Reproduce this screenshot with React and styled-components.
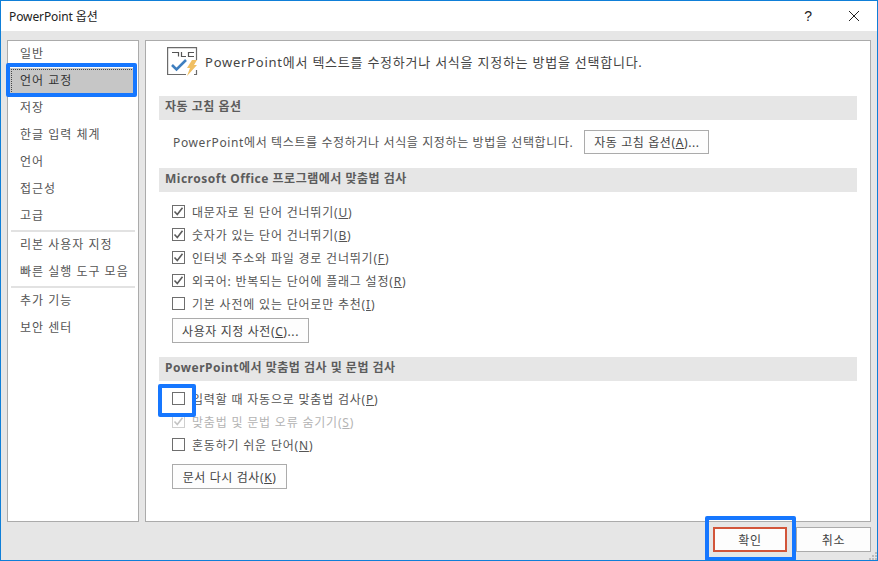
import React from "react"
import styled, { createGlobalStyle } from "styled-components"

const GlobalStyle = createGlobalStyle`
  html, body { margin: 0; padding: 0; background: #fff; }
  * { box-sizing: border-box; }
`

const Window = styled.div`
  position: relative;
  width: 878px;
  height: 561px;
  display: flex;
  flex-direction: column;
  background: #e6e6e6;
  border: 1px solid #0f7fd8;
  font-family: "Noto Sans", "Noto Sans CJK KR", sans-serif;
  font-size: 12px;
  color: #444;
  overflow: hidden;
`

const TitleBar = styled.div`
  height: 30px;
  flex: none;
  display: flex;
  align-items: center;
  background: #fff;
  padding-left: 8px;
  color: #222;
  letter-spacing: -0.1px;
`

const TitleText = styled.div`
  flex: 1;
`

const TitleButton = styled.div`
  width: 46px;
  height: 30px;
  display: flex;
  align-items: center;
  justify-content: center;
  color: #222;
  font-size: 14px;
  font-family: "Liberation Sans", sans-serif;
`

const Body = styled.div`
  flex: 1;
  display: flex;
  gap: 6px;
  padding: 9px 6px 0;
  height: 491px;
`

const Sidebar = styled.div`
  width: 132px;
  height: 482px;
  background: #fff;
  border: 1px solid #ababab;
  display: flex;
  flex-direction: column;
`

const NavItem = styled.div`
  height: 27px;
  flex: none;
  margin: 0 ${(p) => (p.$active ? "3px" : "0")} 0 ${(p) => (p.$active ? "2px" : "0")};
  padding: 0 0 4px ${(p) => (p.$active ? "10px" : "12px")};
  display: flex;
  align-items: center;
  letter-spacing: 1px;
  color: ${(p) => (p.$active ? "#333" : "#555")};
  background: ${(p) => (p.$active ? "#c6c6c6" : "transparent")};
  outline: ${(p) => (p.$active ? "1px dotted #444" : "none")};
  outline-offset: -2px;
`

const NavGap = styled.div`
  height: 2px;
  background: #e2e2e2;
  margin: 0 3px;
`

const Main = styled.div`
  width: 726px;
  height: 482px;
  background: #fff;
  border: 1px solid #ababab;
  padding: 0 13px;
`

const Lead = styled.div`
  height: 40px;
  display: flex;
  align-items: center;
  gap: 7px;
  padding-left: 8px;
  letter-spacing: 0.76px;
  font-size: 13px;
  color: #444;
`

const Section = styled.div`
  height: 24px;
  margin-top: ${(p) => p.$top || 15}px;
  padding: 0 0 4px 6px;
  background: #e6e6e6;
  display: flex;
  align-items: center;
  font-weight: 700;
  letter-spacing: 0.5px;
  color: #5c5c5c;
`

const Row = styled.div`
  display: flex;
  align-items: center;
  height: 24px;
  margin-top: 10px;
  padding-left: 14px;
  gap: 11px;
  letter-spacing: 0.62px;
  color: #555;
`

const Options = styled.div`
  display: flex;
  flex-direction: column;
  padding: ${(p) => p.$top || 8}px 0 0 13px;
`

const CheckRow = styled.div`
  height: 23px;
  display: flex;
  align-items: center;
  gap: 7px;
  letter-spacing: 0.8px;
  color: ${(p) => (p.$disabled ? "#b4b4b4" : "#555")};
`

const Box = styled.span`
  width: 13px;
  height: 13px;
  flex: none;
  border: 1px solid ${(p) => (p.$disabled ? "#cfcfcf" : "#6e6e6e")};
  background: #fff;
  display: flex;
  align-items: center;
  justify-content: center;
`

const Button = styled.div`
  height: ${(p) => p.$h || 25}px;
  width: ${(p) => p.$w}px;
  flex: none;
  display: flex;
  align-items: center;
  justify-content: center;
  background: #fdfdfd;
  border: 1px solid #ababab;
  letter-spacing: 0.6px;
  color: #444;
`

const ActionWrap = styled.div`
  margin-top: ${(p) => p.$top || 3}px;
`

const Footer = styled.div`
  height: 38px;
  flex: none;
  display: flex;
  justify-content: flex-end;
  gap: 9px;
  padding: 5px 6px 0 0;
`

const OkButton = styled(Button)`
  border: 2px solid #d2553a;
`

const Mark = styled.div`
  position: absolute;
  border: 4px solid #1677ff;
  border-radius: 2px;
  left: ${(p) => p.$x}px;
  top: ${(p) => p.$y}px;
  width: ${(p) => p.$w}px;
  height: ${(p) => p.$h}px;
`

const Grip = styled.svg`
  position: absolute;
  right: 0;
  bottom: 0;
`

const Underline = styled.span`
  text-decoration: underline;
  text-underline-offset: 1px;
`

const Check = ({ color }) => (
  <svg width="11" height="11" viewBox="0 0 11 11">
    <path d="M1.5 5.5 L4.3 8.6 L9.5 1.8" fill="none" stroke={color} strokeWidth="1.6" />
  </svg>
)

const Option = ({ label, hot, checked, disabled }) => (
  <CheckRow $disabled={disabled}>
    <Box $disabled={disabled}>{checked && <Check color={disabled ? "#c4c4c4" : "#5c5c5c"} />}</Box>
    <span>
      {label}(<Underline>{hot}</Underline>)
    </span>
  </CheckRow>
)

const ProofIcon = () => (
  <svg width="31" height="29" viewBox="0 0 31 29">
    <path d="M29.5 13V.6H.6V27.5H19" fill="none" stroke="#6b6b6b" strokeWidth="1.2" />
    <path d="M29.5 23v4.5h-2.5" fill="none" stroke="#6b6b6b" strokeWidth="1.2" />
    <path d="M5 5.5h6.5v4M14.5 5v4.5h4.5M27 5.5h-5.5v4H27" fill="none" stroke="#555" strokeWidth="1.2" />
    <path d="M5 18l4.5 4.5L19 13" fill="none" stroke="#3f7fbf" strokeWidth="2.6" />
    <path d="M25 13h5l-3 5h3L20 29l3-8h-3z" fill="#f0bf62" />
  </svg>
)

const CloseIcon = () => (
  <svg width="12" height="12" viewBox="0 0 12 12">
    <path d="M1 1l10 10M11 1L1 11" stroke="#222" strokeWidth="1" fill="none" />
  </svg>
)

export default function App() {
  return (
    <Window>
      <GlobalStyle />
      <TitleBar>
        <TitleText>PowerPoint 옵션</TitleText>
        <TitleButton>?</TitleButton>
        <TitleButton><CloseIcon /></TitleButton>
      </TitleBar>
      <Body>
        <Sidebar>
          <NavItem>일반</NavItem>
          <NavItem $active>언어 교정</NavItem>
          <NavItem>저장</NavItem>
          <NavItem>한글 입력 체계</NavItem>
          <NavItem>언어</NavItem>
          <NavItem>접근성</NavItem>
          <NavItem>고급</NavItem>
          <NavGap />
          <NavItem>리본 사용자 지정</NavItem>
          <NavItem>빠른 실행 도구 모음</NavItem>
          <NavGap />
          <NavItem>추가 기능</NavItem>
          <NavItem>보안 센터</NavItem>
        </Sidebar>
        <Main>
          <Lead>
            <ProofIcon />
            <span>PowerPoint에서 텍스트를 수정하거나 서식을 지정하는 방법을 선택합니다.</span>
          </Lead>
          <Section>자동 고침 옵션</Section>
          <Row>
            <span>PowerPoint에서 텍스트를 수정하거나 서식을 지정하는 방법을 선택합니다.</span>
            <Button $w={125} $h={24}>
              <span>자동 고침 옵션(<Underline>A</Underline>)...</span>
            </Button>
          </Row>
          <Section $top={14}>Microsoft Office 프로그램에서 맞춤법 검사</Section>
          <Options>
            <Option label="대문자로 된 단어 건너뛰기" hot="U" checked />
            <Option label="숫자가 있는 단어 건너뛰기" hot="B" checked />
            <Option label="인터넷 주소와 파일 경로 건너뛰기" hot="F" checked />
            <Option label="외국어: 반복되는 단어에 플래그 설정" hot="R" checked />
            <Option label="기본 사전에 있는 단어로만 추천" hot="I" />
            <ActionWrap $top={3}>
              <Button $w={137}>
                <span>사용자 지정 사전(<Underline>C</Underline>)...</span>
              </Button>
            </ActionWrap>
          </Options>
          <Section $top={14}>PowerPoint에서 맞춤법 검사 및 문법 검사</Section>
          <Options $top={6}>
            <Option label="입력할 때 자동으로 맞춤법 검사" hot="P" />
            <Option label="맞춤법 및 문법 오류 숨기기" hot="S" checked disabled />
            <Option label="혼동하기 쉬운 단어" hot="N" />
            <ActionWrap $top={8}>
              <Button $w={115}>
                <span>문서 다시 검사(<Underline>K</Underline>)</span>
              </Button>
            </ActionWrap>
          </Options>
        </Main>
      </Body>
      <Footer>
        <OkButton $w={74}>확인</OkButton>
        <Button $w={75}>취소</Button>
      </Footer>
      <Mark $x={5} $y={62} $w={131} $h={34} />
      <Mark $x={157} $y={383} $w={38} $h={33} />
      <Mark $x={704} $y={515} $w={91} $h={45} />
      <Grip width="8" height="8" viewBox="0 0 8 8">
        <path d="M6 0h2v2H6zM3 3h2v2H3zM6 3h2v2H6zM0 6h2v2H0zM3 6h2v2H3zM6 6h2v2H6z" fill="#bdbdbd" />
      </Grip>
    </Window>
  )
}
